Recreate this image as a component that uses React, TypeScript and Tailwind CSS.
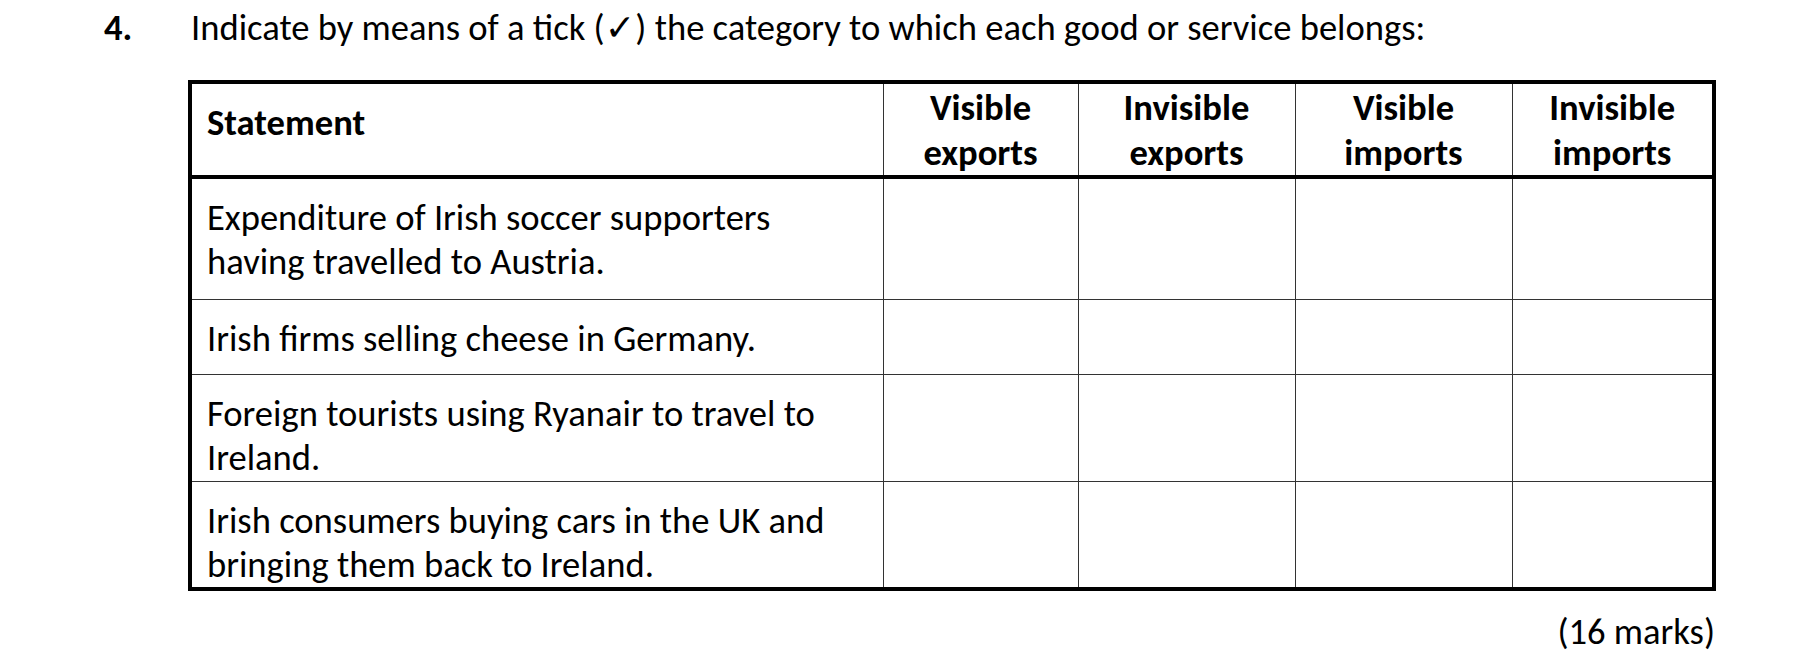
import React from "react";

const rows: { text: React.ReactNode; height: string }[] = [
  {
    text: (
      <>
        Expenditure of Irish soccer supporters
        <br />
        having travelled to Austria.
      </>
    ),
    height: "h-[122px]",
  },
  { text: <>Irish firms selling cheese in Germany.</>, height: "h-[75px]" },
  {
    text: (
      <>
        Foreign tourists using Ryanair to travel to
        <br />
        Ireland.
      </>
    ),
    height: "h-[107px]",
  },
  {
    text: (
      <>
        Irish consumers buying cars in the UK and
        <br />
        bringing them back to Ireland.
      </>
    ),
    height: "h-[107px]",
  },
];

const categories = [
  ["Visible", "exports"],
  ["Invisible", "exports"],
  ["Visible", "imports"],
  ["Invisible", "imports"],
];

const App: React.FC = () => {
  return (
    <div className="w-[1818px] h-[650px] bg-white text-black font-['Carlito','Lato','DejaVu_Sans',sans-serif] text-[36.6px] leading-[44px]">
      {/* Question */}
      <div className="flex pt-[6px]">
        <span className="w-[87px] ml-[104px] font-bold">4.</span>
        <span>Indicate by means of a tick (✓) the category to which each good or service belongs:</span>
      </div>

      {/* Table */}
      <table className="mt-[30px] ml-[188px] w-[1524px] table-fixed border-collapse border-4 border-black">
        <colgroup>
          <col className="w-[693px]" />
          <col className="w-[195px]" />
          <col className="w-[217px]" />
          <col className="w-[217px]" />
          <col className="w-[202px]" />
        </colgroup>
        <thead>
          <tr className="h-[93px] border-b-4 border-black">
            <th className="align-top text-left font-bold p-0 pt-[17px] pl-[15px] border-r border-[#333]">Statement</th>
            {categories.map(([a, b], i) => (
              <th key={i} className="align-top text-center font-bold p-0 pt-[1px] leading-[45px] border-r border-[#333]">
                {a}
                <br />
                {b}
              </th>
            ))}
          </tr>
        </thead>
        <tbody>
          {rows.map((row, i) => (
            <tr key={i} className={`${row.height} border-b border-[#333]`}>
              <td className="align-top p-0 pt-[17px] pl-[15px] border-r border-[#333]">{row.text}</td>
              <td className="p-0 border-r border-[#333]" />
              <td className="p-0 border-r border-[#333]" />
              <td className="p-0 border-r border-[#333]" />
              <td className="p-0" />
            </tr>
          ))}
        </tbody>
      </table>

      <div className="w-[1715px] text-right mt-[23px] leading-[36px]">(16 marks)</div>
    </div>
  );
};

export default App;
